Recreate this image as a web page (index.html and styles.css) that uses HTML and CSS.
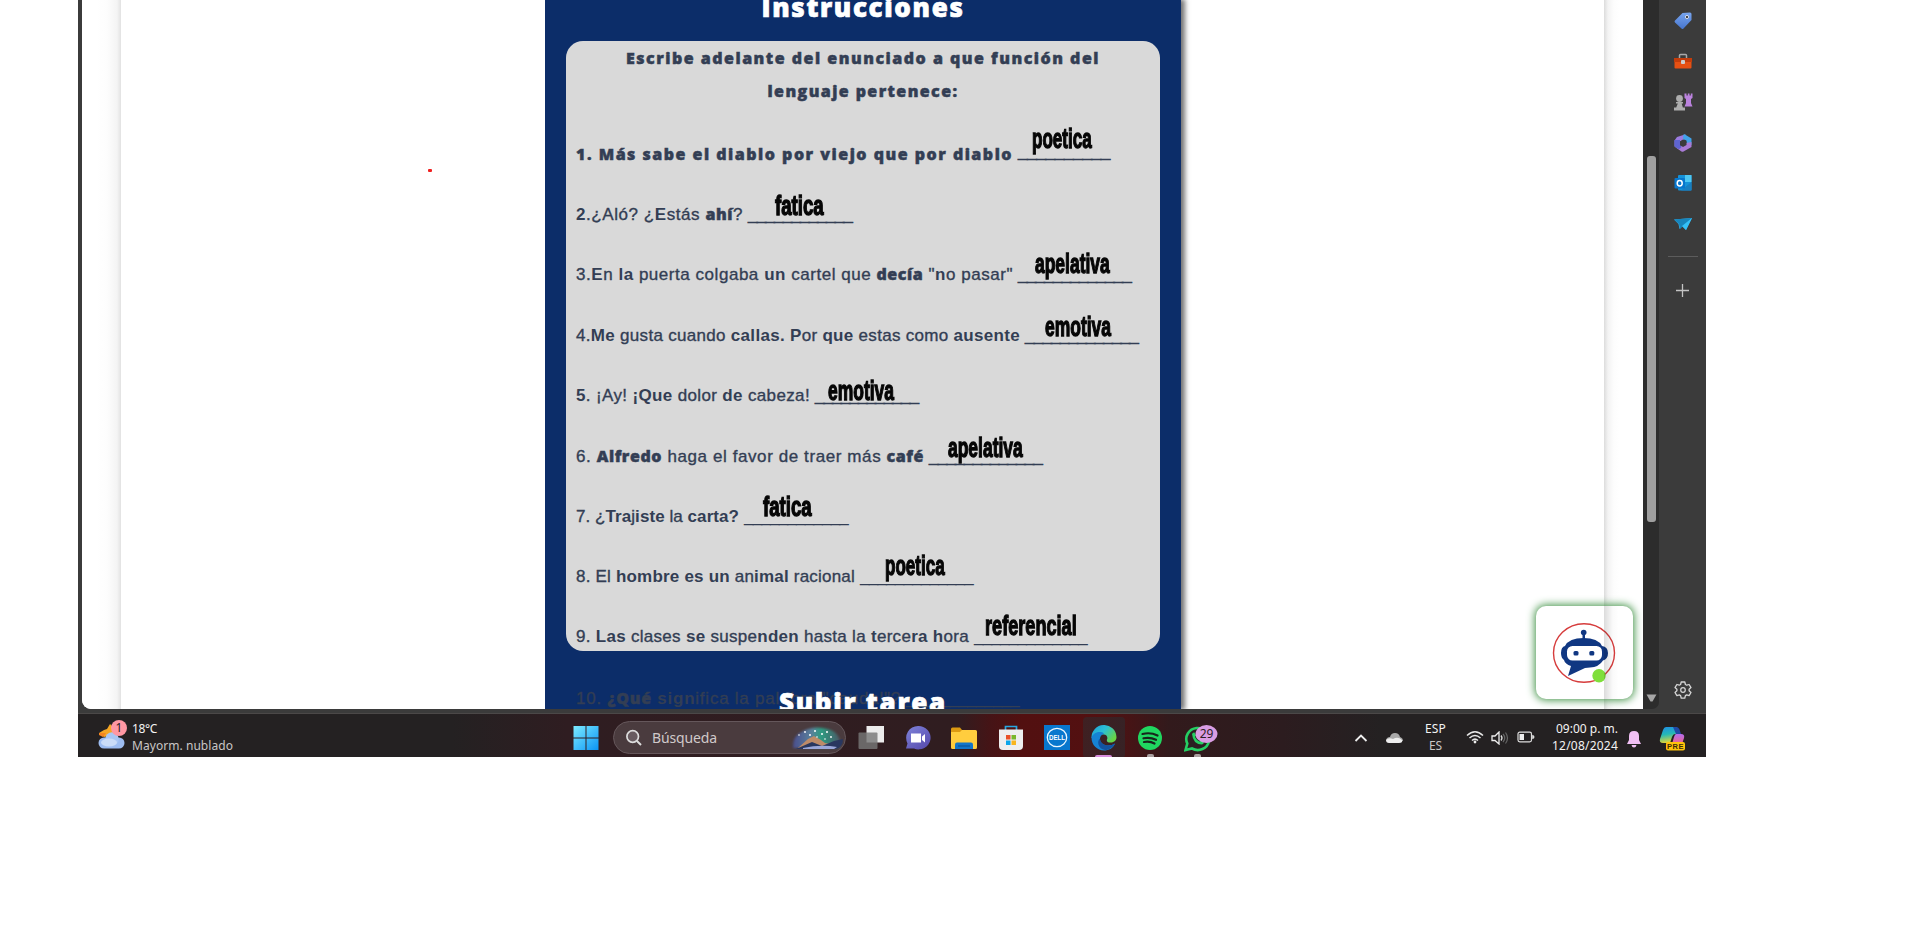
FILE: index.html
```html
<!DOCTYPE html>
<html lang="es">
<head>
<meta charset="utf-8">
<title>Instrucciones</title>
<link rel="stylesheet" href="styles.css">
</head>
<body>
<div class="screen">
  <div class="browser">
    <div class="viewport">
      <div class="edge edge-left"></div>
      <div class="page">
        <i class="red-dot"></i>
        <main class="sheet">
          <h1 class="title"><span class="fit" data-w="203">Instrucciones</span></h1>
          <section class="card">
            <h2 class="lead"><span class="fit" data-w="474">Escribe adelante del enunciado a que función del</span><span class="fit" data-w="191">lenguaje pertenece:</span></h2>
            <ol class="rows">
              <li><span class="fit heavy" data-w="437">1. Más sabe el diablo por viejo que por diablo</span><span class="fit blank up" data-w="92">__________</span><b class="ans" data-w="60" style="left:456px;bottom:12px">poetica</b></li>
              <li><span class="fit" data-w="167"><b>2</b>.¿Aló? ¿<b>E</b>stás <b class="heavy">ahí</b>?</span><span class="fit blank" data-w="104">____________</span><b class="ans" data-w="49" style="left:199px;bottom:6px">fatica</b></li>
              <li><span class="fit" data-w="437">3.<b>E</b>n <b>la</b> puerta colgaba <b>un</b> cartel que <b class="heavy">decía</b> "<b>n</b>o pasar"</span><span class="fit blank" data-w="113">_____________</span><b class="ans" data-w="75" style="left:459px;bottom:8px">apelativa</b></li>
              <li><span class="fit" data-w="444">4.<b>Me</b> gusta cuando <b>callas. P</b>or <b>que</b> estas como <b>ausente</b></span><span class="fit blank" data-w="113">_____________</span><b class="ans" data-w="66" style="left:469px;bottom:6px">emotiva</b></li>
              <li><span class="fit" data-w="234"><b>5</b>. ¡Ay! <b>¡Que</b> dolor <b>de</b> cabeza!</span><span class="fit blank" data-w="103">____________</span><b class="ans" data-w="66" style="left:252px;bottom:2px">emotiva</b></li>
              <li><span class="fit" data-w="348">6. <b class="heavy">Alfredo</b> haga el favor de traer más <b class="heavy">café</b></span><span class="fit blank" data-w="113">_____________</span><b class="ans" data-w="75" style="left:372px;bottom:6px">apelativa</b></li>
              <li><span class="fit" data-w="163">7. ¿<b>Tra</b>j<b>iste</b> la <b>carta?</b></span><span class="fit blank thin" data-w="104">____________</span><b class="ans" data-w="49" style="left:187px;bottom:7px">fatica</b></li>
              <li><span class="fit" data-w="279">8. El <b>hombre es un</b> an<b>imal</b> racional</span><span class="fit blank thin" data-w="113">_____________</span><b class="ans" data-w="60" style="left:309px;bottom:8px">poetica</b></li>
              <li><span class="fit" data-w="393">9. <b>Las</b> clases <b>se</b> suspe<b>nden</b> hasta la <b>t</b>erce<b>ra</b> <b>h</b>ora</span><span class="fit blank thin" data-w="113">_____________</span><b class="ans" data-w="92" style="left:409px;bottom:8px">referencial</b></li>
              <li><span class="fit" data-w="325">10. <b class="heavy">¿Qué</b> <b>sign</b>ifica la palabra "caudal"?</span><span class="fit blank thin" data-w="113">_____________</span></li>
            </ol>
          </section>
          <h1 class="title second"><span class="fit" data-w="168">Subir tarea</span></h1>
        </main>
      </div>
      <div class="edge edge-right"></div>
      <div class="bot">
        <svg width="97" height="93" viewBox="0 0 97 93">
          <ellipse cx="48" cy="47" rx="30.5" ry="29.3" fill="#fff" stroke="#d63c3c" stroke-width="1.4"/>
          <g fill="#103782"><circle cx="47.7" cy="26.5" r="2.8"/><path d="M46.5 28h2.500v6h-2.500z"/><path d="M29 40Q33 32 47.500 32Q62 32 66 40Q72 41 72 47Q72 53 67 54.500Q63 61 54 61.500L49 62L32 70L35 60Q29 58 28 54Q25 52 25 47Q25 41 29 40z"/></g>
          <rect x="31" y="40" width="35" height="14.500" rx="5.500" fill="#fff"/>
          <rect x="37.500" y="45" width="5" height="4.600" rx="1.500" fill="#103782"/><rect x="53.300" y="45" width="5" height="4.600" rx="1.500" fill="#103782"/>
          <circle cx="63" cy="69.700" r="6.700" fill="#7fdf3b"/>
          <rect x="68" y="0" width="29" height="93" fill="url(#sh)"/>
          <defs><linearGradient id="sh"><stop offset="0" stop-color="#000" stop-opacity=".14"/><stop offset=".3" stop-color="#000" stop-opacity=".02"/><stop offset=".5" stop-color="#000" stop-opacity="0"/></linearGradient></defs>
        </svg>
      </div>
    </div>
    <div class="scroll"><div class="thumb"></div><svg width="11" height="8" viewBox="0 0 11 8"><path d="M.5.500h10L6.500 7.500h-2z" fill="#a6a6a6"/></svg></div>
    <nav class="side">
      <svg width="20" height="20" viewBox="0 0 20 20"><defs><linearGradient id="tg" x2="0" y2="1"><stop stop-color="#78a5ee"/><stop offset="1" stop-color="#4675ce"/></linearGradient></defs><path d="M9.500 2L17 1.500Q18.500 1.500 18.500 3v6L10.500 17.500Q9.500 18.500 8.500 17.500L2 11.500Q1 10.500 2 9.500z" fill="url(#tg)"/><circle cx="14" cy="6" r="1.600" fill="#333" stroke="#d4dcef"/></svg>
      <svg width="20" height="20" viewBox="0 0 20 20"><path d="M6.500 6V3.500q0-1 1-1h5q1 0 1 1V6" fill="none" stroke="#a9a9a9" stroke-width="1.500"/><rect x="1.500" y="6" width="17" height="10.500" rx="1" fill="#e65013"/><path d="M1 6h18v4H1z" fill="#c33c0b"/><rect x="8" y="8" width="4" height="4" rx="1" fill="#ccc"/></svg>
      <svg width="20" height="20" viewBox="0 0 20 20"><g fill="#adadad"><circle cx="6.500" cy="6.500" r="3.400"/><path d="M3 10h7v1.600H3zM5 11h3.500l1.500 5h-7zM1 15.500h11v3H1z"/></g><path d="M11.500 1.500h2v2h1.300v-2h1.700v2h1.300v-2h1.700V6l-1.500 1v4l1.500 3.500h-8L13 11V7l-1.500-1z" fill="#ba82dd"/></svg>
      <svg width="20" height="20" viewBox="0 0 20 20"><path d="M12 1.500L4 4 1.500 7.500v6L7 14V8.500l5-2.500 1-4z" fill="#9b7be0"/><path d="M10.500 1.500Q11 1 12 1.500l6.500 4V12l-5-2V7.500L10 6z" fill="#41a3ea"/><path d="M18.500 9v5l-8 4.500q-1 .5-2 0L2 14q3 1 5-.5l6-3.500z" fill="#a97bd6"/><path d="M1.500 7v6.500l4 2.500q3-.5 3-3L7 12V7z" fill="#5e64cf"/><path d="M10 6.500l3.500 2v3.500L10 14l-3-2V8.500z" fill="#3b3b3b"/></svg>
      <svg width="20" height="20" viewBox="0 0 20 20"><rect x="5" y="2" width="13.500" height="15.500" rx="1" fill="#1492d9"/><path d="M12 2h6.500v7H12z" fill="#4dc7f2"/><path d="M18.500 8v9.500H8L18.500 9z" fill="#187fc1"/><rect x="1.500" y="5" width="10.500" height="10.500" rx="1" fill="#0776cc"/><ellipse cx="6.700" cy="10.200" rx="2.500" ry="2.700" fill="none" stroke="#fff" stroke-width="1.500"/></svg>
      <svg width="20" height="20" viewBox="0 0 20 20"><path d="M1 5.500L19 4l-6 12-4-4-2.500 3L5.500 10z" fill="#39b5ee"/><path d="M1 5.500L19 4 6 10zM6 10L19 4 7 15z" fill="#1785bc"/><path d="M9 12l10-8-6 12z" fill="#34c0f6"/></svg>
      <hr>
      <svg class="plus" width="15" height="15" viewBox="0 0 15 15"><path d="M7.500 1v13M1 7.500h13" stroke="#c4c4c4" stroke-width="1.300"/></svg>
      <svg class="gear" width="20" height="20" viewBox="0 0 20 20"><path d="M8.200 2h3.600l.6 2.500 1.300.7 2.400-.7 1.900 3.100-1.900 1.700v1.500l1.900 1.700-1.900 3.100-2.400-.7-1.300.7-.6 2.500H8.200l-.6-2.500-1.300-.7-2.400.7L2 12.500l1.900-1.700V9.300L2 7.600l1.900-3.100 2.400.7 1.300-.7z" fill="none" stroke="#d6d6d6" stroke-width="1.300" stroke-linejoin="round"/><circle cx="10" cy="10" r="2.300" fill="none" stroke="#d6d6d6" stroke-width="1.200"/></svg>
    </nav>
  </div>
  <footer class="taskbar">
    <div class="weather">
      <svg width="30" height="32" viewBox="0 0 30 32"><path d="M13 5l3 3v8L7 18l-2-2-3-2 5-3 3-1z" fill="#f5a623"/><path d="M2 14h7l-3 4-4-2z" fill="#f58420"/><rect x="1.500" y="18.500" width="26" height="11" rx="5.500" fill="#9dbcf0"/><circle cx="15" cy="20" r="6.800" fill="#a9c6f4"/><ellipse cx="12" cy="23.500" rx="8" ry="4" fill="#cbdcf7"/><circle cx="22" cy="9" r="8" fill="#ff97a3"/><text x="22" y="13.200" text-anchor="middle" class="badge-t">1</text></svg>
      <p><span class="fit hi" data-w="25">18°C</span><span class="fit" data-w="101">Mayorm. nublado</span></p>
    </div>
    <svg class="win" width="26" height="25" viewBox="0 0 26 25"><defs><linearGradient id="wg" x2="1" y2="1"><stop stop-color="#7cebff"/><stop offset="1" stop-color="#0b94f5"/></linearGradient></defs><path d="M.5 1h12v11.500H.5zM13.500 1h12v11.500h-12zM.5 13.500h12V25H.5zM13.500 13.500h12V25h-12z" fill="url(#wg)"/></svg>
    <div class="search">
      <svg width="18" height="18" viewBox="0 0 18 18"><circle cx="7.700" cy="7.500" r="5.800" fill="#685b60" stroke="#ddd" stroke-width="1.700"/><path d="M12 12l4 4" stroke="#ddd" stroke-width="2"/></svg>
      <span class="fit" data-w="65">Búsqueda</span>
      <svg class="art" width="54" height="26" viewBox="0 0 54 26"><defs><linearGradient id="sa"><stop stop-color="#4a4e8e"/><stop offset=".4" stop-color="#59819b"/><stop offset=".6" stop-color="#2d9c81"/><stop offset="1" stop-color="#4a5966"/></linearGradient><filter id="bl"><feGaussianBlur stdDeviation="1.300"/></filter></defs><path d="M3 23Q2 11 13 6Q24 0 38 4Q48 7 50 15V23z" fill="url(#sa)" filter="url(#bl)"/><path d="M8 23L18 14l6-3 7 4 4 3 5 1-9 3z" fill="#bd8b68"/><path d="M6 24l16-7 10 4 12-5 9-2q0 8-7 10z" fill="#29375f"/><path d="M13 23q18-4 34-1l-3 2H13z" fill="#9aa7d9"/><g fill="#fff"><circle cx="9" cy="10" r=".8"/><circle cx="15" cy="7" r=".9"/><circle cx="20" cy="10" r="1"/><circle cx="25" cy="6" r="1"/><circle cx="27" cy="12" r=".8"/><circle cx="32" cy="9" r="1"/><circle cx="37" cy="7" r="1"/><circle cx="41" cy="12" r=".9"/><circle cx="35" cy="14" r=".8"/></g></svg>
    </div>
    <div class="apps">
      <svg width="26" height="26" viewBox="0 0 26 26"><rect x="8.500" y="1" width="17.500" height="16.500" fill="#ececec"/><rect x=".5" y="7.500" width="19" height="16.500" rx="1" fill="#777" fill-opacity=".82"/></svg>
      <svg width="26" height="26" viewBox="0 0 26 26"><defs><linearGradient id="cg" x2=".8" y2="1"><stop stop-color="#7e83da"/><stop offset="1" stop-color="#584cae"/></linearGradient></defs><path d="M13 1a12 11.700 0 1 1-4 22.500H1l1.500-5A12 12 0 0 1 13 1z" fill="url(#cg)"/><rect x="6" y="8.500" width="10" height="9" fill="#fff"/><path d="M17 11.500L20 9v8.500l-3-2.500z" fill="#fff"/></svg>
      <svg width="26" height="26" viewBox="0 0 26 26"><path d="M0 4q0-1.500 1.500-1.500H9l2 2.500v6H0z" fill="#dc9a12"/><path d="M0 7h9l2-2h13.500Q26 5 26 6.500v16q0 1.500-1.500 1.500h-23Q0 24 0 22.500z" fill="#ffcd3e"/><path d="M4 24v-4.500q0-2 2-2h14q2 0 2 2V24z" fill="#1175c9"/><path d="M7 21h12" stroke="#084d90"/></svg>
      <svg width="26" height="26" viewBox="0 0 26 26"><path d="M7.500 5V1.500h11V5" fill="none" stroke="#28a7e1" stroke-width="1.700"/><path d="M1 4.500h24V21q0 4-4 4H5q-4 0-4-4z" fill="#eee"/><path d="M8 10h4.500v4.500H8z" fill="#e95128"/><path d="M13.500 10H18v4.500h-4.500z" fill="#79b72b"/><path d="M8 15.500h4.500V20H8z" fill="#0ca5ea"/><path d="M13.500 15.500H18V20h-4.500z" fill="#f8b51d"/></svg>
      <svg width="26" height="26" viewBox="0 0 26 26"><path d="M0 0h26v25H0z" fill="#0877ce"/><ellipse cx="13" cy="12.500" rx="9.700" ry="9.200" fill="none" stroke="#eaf6ff" stroke-width="1.300"/><text x="13" y="15.300" text-anchor="middle" textLength="16" lengthAdjust="spacingAndGlyphs" class="dell">DELL</text></svg>
      <span class="tile"><svg width="26" height="26" viewBox="0 0 26 26"><defs><linearGradient id="eg" x2="1" y2=".6"><stop stop-color="#1d9fd7"/><stop offset=".5" stop-color="#2bbfd5"/><stop offset="1" stop-color="#68d545"/></linearGradient></defs><path d="M.5 13A12.500 12.500 0 0 1 25.500 12c0 4-3 5.500-6 5.500-3.500 0-4-1.500-3.500-3 1-2 0-5-3.500-5C8 9.500 4 9 .5 13z" fill="url(#eg)"/><path d="M.5 12.500C3 6.500 10 6 13 8.500 10 10 9 12 9 14c0 4 4 6.500 8 6.500 3 0 5-1 7-2-2 5-6.500 7-11 7C6 25.500.5 20 .5 12.500z" fill="#1683d3"/><path d="M9 13.500c0 4 4 7 8 7 3 0 5-1 7-2-2 4-6 6.500-10 6.500C7 24 5.500 16 9 13.500z" fill="#13539f"/></svg></span>
      <span class="app"><svg width="26" height="26" viewBox="0 0 26 26"><circle cx="13" cy="13" r="12" fill="#20d760"/><path d="M5.500 9q8-2 15 1.500M6.500 13.300q6.500-1.500 12.500 1.500M7 17q6-1 10.500 1.500" fill="none" stroke="#17251c" stroke-width="2.200" stroke-linecap="round"/></svg></span>
      <span class="app"><svg width="34" height="30" viewBox="0 0 34 30"><path d="M1.500 25l1.800-6.500A11.500 11 0 1 1 8 23.500z" fill="#2b2022" stroke="#25cf63" stroke-width="2.600"/><path d="M8 9q1-2 2.500-1.500l1.500 3-1 1.500q1.500 3 4.500 4.500l1.500-1.500 3 1.500q0 2.500-2.500 3Q9 19 8 9z" fill="#25cf63"/><ellipse cx="22.500" cy="9" rx="11" ry="9" fill="#d99de3"/><text x="22.500" y="13.200" text-anchor="middle" class="badge-t">29</text></svg></span>
    </div>
    <div class="tray">
      <svg width="14" height="10" viewBox="0 0 14 10"><path d="M1.500 8L7 2.500 12.500 8" fill="none" stroke="#eee" stroke-width="1.800"/></svg>
      <svg class="cloud" width="18" height="12" viewBox="0 0 18 12"><path d="M1 8Q2 5 5 5 6 1 10 1t5 4q3 1 3 4H3z" fill="#a9a9a9"/><path d="M1 8q3-3 7-1 5-3 9 1 1 3-3 3H4Q1 11 1 8z" fill="#eee"/></svg>
      <p class="lang"><span class="fit hi" data-w="21">ESP</span><span class="fit" data-w="13">ES</span></p>
      <svg class="wifi" width="18" height="14" viewBox="0 0 18 14"><path d="M1 5.500q8-7.500 16 0M3.500 8q5.500-5 11 0M6 10.500q3-2.700 6 0" fill="none" stroke="#e8e8e8" stroke-width="1.500"/><circle cx="9" cy="12" r="1.400" fill="#eee"/></svg>
      <svg class="spk" width="18" height="14" viewBox="0 0 18 14"><path d="M1 5h3l4-4v12L4 9.500H1z" fill="none" stroke="#eee" stroke-width="1.300"/><path d="M10 4.500q2 2.500 0 5" fill="none" stroke="#ddd" stroke-width="1.300"/><path d="M12 3q3.500 4 0 8M14.500 1.500q4 5.500 0 11" fill="none" stroke="#666" stroke-width="1.200"/></svg>
      <svg class="bat" width="18" height="12" viewBox="0 0 18 12"><rect x="1" y="1.200" width="13.500" height="9.600" rx="1.800" fill="none" stroke="#ddd" stroke-width="1.200"/><path d="M2.500 3H7v6H2.500z" fill="#eee"/><path d="M15.200 4Q17.500 4 17.500 6t-2.300 2z" fill="#ddd"/></svg>
      <p class="clock"><span class="fit hi" data-w="62">09:00 p. m.</span><span class="fit hi" data-w="66">12/08/2024</span></p>
      <svg class="bell" width="16" height="18" viewBox="0 0 16 18"><path d="M8 1q5 0 5 5v4l2 4H1l2-4V6q0-5 5-5z" fill="#f0bff3"/><path d="M5.500 15h5q-.5 2.500-2.500 2.500T5.500 15z" fill="#f0bff3"/></svg>
      <svg class="cop" width="27" height="26" viewBox="0 0 27 26"><defs><linearGradient id="c1" x2=".2" y2="1"><stop stop-color="#218de5"/><stop offset=".5" stop-color="#24b9b7"/><stop offset="1" stop-color="#ddd63a"/></linearGradient><linearGradient id="c2" x2="0" y2="1"><stop stop-color="#b36cf0"/><stop offset="1" stop-color="#f26483"/></linearGradient></defs><path d="M7 1h9q3 0 4 4l1 3h-5q-2 0-3 3l-2 6H4q-4 0-3-4L4 4q1-3 3-3z" fill="url(#c1)"/><path d="M14 1h3q3 0 4 4l1 3h-5z" fill="#204aa7"/><path d="M17 8h5q4 0 3 4l-2 6H13l2-7q1-3 2-3z" fill="url(#c2)"/><rect x="7" y="16" width="19" height="8.500" rx="2" fill="#ffc30b"/><text x="16.500" y="23.200" text-anchor="middle" class="pre">PRE</text></svg>
    </div>
  </footer>
</div>
<script src="fit.js"></script>
</body>
</html>
```
FILE: styles.css
```css
* { box-sizing: border-box; }
body { margin: 0; background: #fff; overflow: hidden; font-family: "Liberation Sans", sans-serif; }
svg { display: block; flex: none; }
p, h1, h2, ol { margin: 0; padding: 0; }
.screen { width: 1628px; height: 757px; margin-left: 78px; overflow: hidden; }
.browser { display: flex; height: 714px; padding: 0 0 5px 4px; background: #3b3b3b; border-bottom: 1px solid #4b4848; }
.viewport { position: relative; display: flex; width: 1561px; height: 709px; overflow: hidden; background: #fff; border-bottom-left-radius: 9px; }
.edge { flex: none; width: 39px; }
.edge-left { background: linear-gradient(to left, #e2e2e2 0, #f4f4f4 4px, #fdfdfd 14px, #fff 24px); }
.edge-right { background: linear-gradient(to right, #dcdcdc 0, #f3f3f3 4px, #fdfdfd 10px, #fff 16px); }
.page { position: relative; flex: none; width: 1483px; padding-left: 424px; }
.red-dot { position: absolute; left: 307px; top: 169px; width: 4px; height: 3px; border-radius: 1px; background: #f02020; }
.sheet { width: 636px; height: 709px; padding: 0 21px; background: #0c2d69; box-shadow: 3px 0 5px 1px rgba(0,0,0,.55); clip-path: inset(0 -20px 0 0); }
.fit { display: inline-block; white-space: pre; }
.title { height: 41px; text-align: center; color: #fff; font: 800 26px/34px "Open Sans", sans-serif; -webkit-text-stroke: .7px #fff; }
.title span { transform: translateY(-10px); }
.card { height: 610px; padding: 7px 10px 0; background: #d9d9d9; border-radius: 17px; color: #333e54; }
.lead { display: flex; flex-direction: column; align-items: center; height: 66px; font: 800 16px/33px "Open Sans", sans-serif; -webkit-text-stroke: .5px #333e54; }
.lead span { transform: translateY(-6px); }
.rows { display: grid; grid-template-rows: 50px 61px 60px 61px 60px 61px 60px 60px 60px 62px; list-style: none; font-size: 17px; line-height: 20px; -webkit-text-stroke: .35px #333e54; }
.rows li { position: relative; display: flex; align-items: flex-end; gap: 5px; white-space: pre; }
.rows b { -webkit-text-stroke: 0; }
.rows .heavy { font: 800 16px/20px "Open Sans", sans-serif; -webkit-text-stroke: .5px #333e54; }
.rows .fit > .heavy { line-height: 18px; }
.blank { font-weight: bold; -webkit-text-stroke: .9px #333e54; transform: translateY(1px); }
.blank.up { transform: translateY(-1px); }
.blank.thin { font-weight: normal; -webkit-text-stroke: 0; transform: none; }
.rows .ans { position: absolute; display: block; color: #060606; font-size: 27px; line-height: 26px; white-space: pre; transform-origin: 0 50%; -webkit-text-stroke: 1.3px #060606; }
.second { position: relative; }
.second span { transform: translateY(34px); }
.bot { position: absolute; left: 1454px; top: 606px; width: 97px; height: 93px; background: #fff; border-radius: 10px; box-shadow: 0 0 8px 1px #3b8f40; overflow: visible; }
.scroll { display: flex; flex-direction: column; align-items: center; justify-content: space-between; width: 16px; height: 709px; padding: 156px 0 7px; background: #2c2c2c; border-bottom-right-radius: 7px; }
.thumb { width: 9px; height: 366px; background: #9f9f9f; border-radius: 3px; margin-left: 1px; }
.side { display: flex; flex-direction: column; align-items: center; flex: 1; padding-top: 11px; gap: 20.500px; }
.side hr { width: 30px; height: 1px; margin: 2px 0 0; border: 0; background: #5c5c5c; }
.plus { margin-top: 5px; }
.gear { margin-top: auto; margin-bottom: 8px; }
.taskbar { position: relative; display: flex; height: 43px; padding-left: 20px; font: 12px/17px "Noto Sans", sans-serif; color: #c9c6c6; background: linear-gradient(90deg, #242122 0, #242122 23%, #2f1d21 30%, #301d20 54%, #451416 56%, #521010 58%, #531011 63%, #321a1c 67%, #2c1c1f 74%, #242122 80%); }
.weather { display: flex; width: 475px; }
.weather svg { margin: 5px 0 0 -1px; }
.weather p { display: flex; flex-direction: column; align-items: flex-start; padding: 6px 0 0 5px; }
.hi { color: #f3f3f3; }
.badge-t { font: 12px "Noto Sans", sans-serif; fill: #2c2023; }
.win { margin-top: 11px; }
.search { display: flex; width: 233px; height: 33px; margin: 7px 0 0 14px; padding: 0 0 0 11px; align-items: center; border-radius: 17px; border: 1px solid #65575b; background: #4a3b3e; color: #d0c9ca; font-size: 14px; }
.search .fit { margin-left: 9px; }
.art { margin-left: auto; margin-right: 1px; }
.apps { display: flex; padding-top: 11px; margin-left: 12px; gap: 20.500px; }
.tile, .app { display: flex; position: relative; }
.tile { width: 42px; height: 41px; margin: -8px -8px 0 -8px; padding: 8px 0 0 8px; border-radius: 4px; background: linear-gradient(90deg, #3f2022, #372225); }
.tile::after, .app::after { content: ""; position: absolute; bottom: 0; left: 12px; width: 17px; height: 3px; background: #d88ede; border-radius: 2px 2px 0 0; }
.app::after { left: 10px; width: 7px; height: 3px; background: #aaa0a0; }
.tray { position: absolute; left: 1276px; top: 0; display: flex; height: 43px; }
.tray > svg { margin-top: 19px; }
.tray .cloud { margin: 18px 0 0 17px; }
.tray p { display: flex; flex-direction: column; padding-top: 6px; }
.lang { width: 21px; align-items: center; margin-left: 22px; }
.tray .wifi { margin: 16px 0 0 20px; }
.tray .spk { margin: 17px 0 0 7px; }
.tray .bat { margin: 17px 0 0 8px; }
.clock { width: 66px; align-items: flex-end; margin-left: 17px; }
.tray .bell { margin: 16px 0 0 8px; }
.tray .cop { margin: 12px 0 0 17px; }
.dell { font: bold 7px "Liberation Sans", sans-serif; fill: #fff; }
.pre { font: bold 7.500px "Liberation Sans", sans-serif; fill: #3d2a08; letter-spacing: .5px; }
```
FILE: fit.js
```js
// Spreads each label over the width it declares.
document.querySelectorAll('.fit').forEach(function (el) {
  var spare = Number(el.dataset.w) - el.getBoundingClientRect().width;
  el.style.letterSpacing = spare / el.textContent.length + 'px';
});
// Condenses the handwritten answers.
document.querySelectorAll('.ans').forEach(function (el) {
  el.style.transform = 'scaleX(' + Number(el.dataset.w) / el.offsetWidth + ')';
});
```
